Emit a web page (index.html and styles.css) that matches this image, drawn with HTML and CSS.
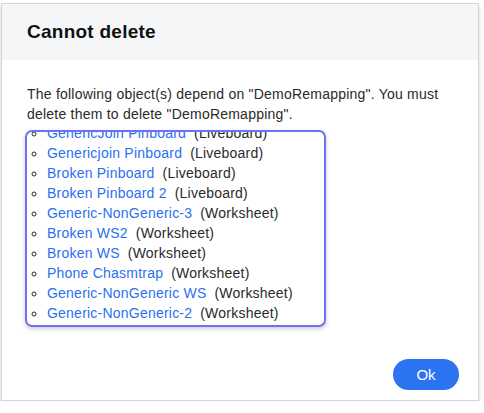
FILE: index.html
```html
<!DOCTYPE html>
<html>
<head>
<meta charset="utf-8">
<link rel="stylesheet" href="styles.css">
</head>
<body>
<div class="dialog">
  <div class="dialog-header">
    <h1 class="dialog-title">Cannot delete</h1>
  </div>
  <div class="dialog-body">
    <p class="message">The following object(s) depend on "DemoRemapping". You must delete them to delete "DemoRemapping".</p>
    <div class="list-frame">
      <ul class="dep-list">
        <li><a class="dep-link">GenericJoin Pinboard</a><span class="dep-type">(Liveboard)</span></li>
        <li><a class="dep-link">Genericjoin Pinboard</a><span class="dep-type">(Liveboard)</span></li>
        <li><a class="dep-link">Broken Pinboard</a><span class="dep-type">(Liveboard)</span></li>
        <li><a class="dep-link">Broken Pinboard 2</a><span class="dep-type">(Liveboard)</span></li>
        <li><a class="dep-link">Generic-NonGeneric-3</a><span class="dep-type">(Worksheet)</span></li>
        <li><a class="dep-link">Broken WS2</a><span class="dep-type">(Worksheet)</span></li>
        <li><a class="dep-link">Broken WS</a><span class="dep-type">(Worksheet)</span></li>
        <li><a class="dep-link">Phone Chasmtrap</a><span class="dep-type">(Worksheet)</span></li>
        <li><a class="dep-link">Generic-NonGeneric WS</a><span class="dep-type">(Worksheet)</span></li>
        <li><a class="dep-link">Generic-NonGeneric-2</a><span class="dep-type">(Worksheet)</span></li>
      </ul>
    </div>
  </div>
  <div class="dialog-footer">
    <button class="ok-btn">Ok</button>
  </div>
</div>
</body>
</html>
```
FILE: styles.css
```css
* { box-sizing: border-box; }
html, body { margin: 0; padding: 0; background: #ffffff; }
body {
  font-family: "Liberation Sans", Arial, sans-serif;
  color: #1d1d1f;
  padding: 3px 0 0 1px;
}
.dialog {
  width: 478px;
  height: 398px;
  border: 1px solid #d4d4d6;
  background: #ffffff;
  box-shadow: 0 3px 4px rgba(0,0,0,0.18);
  display: flex;
  flex-direction: column;
}
.dialog-header {
  height: 56px;
  background: #f5f6f8;
  display: flex;
  align-items: center;
  padding-left: 25px;
}
.dialog-title {
  margin: 0;
  font-size: 19px;
  font-weight: bold;
  color: #111;
  letter-spacing: 0.25px;
}
.dialog-body {
  flex: 1;
  padding: 24px 26px 0 25px;
}
.message {
  margin: 0 0 6px 0;
  font-size: 14px;
  line-height: 20px;
  letter-spacing: 0.22px;
  color: #2a2a2a;
}
.list-frame {
  width: 301px;
  height: 197px;
  margin-left: -2px;
  border: 2px solid #6e71f7;
  border-radius: 7px;
  box-shadow: 0 2px 4px rgba(0,0,0,0.2);
  overflow: hidden;
}
.dep-list {
  margin: -9px 0 0 0;
  padding: 0 0 0 20px;
  list-style: circle;
  font-size: 14px;
  line-height: 20px;
  letter-spacing: 0.22px;
}
.dep-list li { color: #2a2a2a; padding-left: 0; }
.dep-link { color: #2b6ff0; text-decoration: none; }
.dep-type { margin-left: 8px; color: #2a2a2a; }
.dialog-footer {
  display: flex;
  justify-content: flex-end;
  padding: 0 19px 10px 0;
}
.ok-btn {
  width: 66px;
  height: 31px;
  border: none;
  border-radius: 16px;
  background: #2b73f0;
  color: #ffffff;
  font-family: "Liberation Sans", Arial, sans-serif;
  font-size: 15px;
  padding: 0;
}
```
